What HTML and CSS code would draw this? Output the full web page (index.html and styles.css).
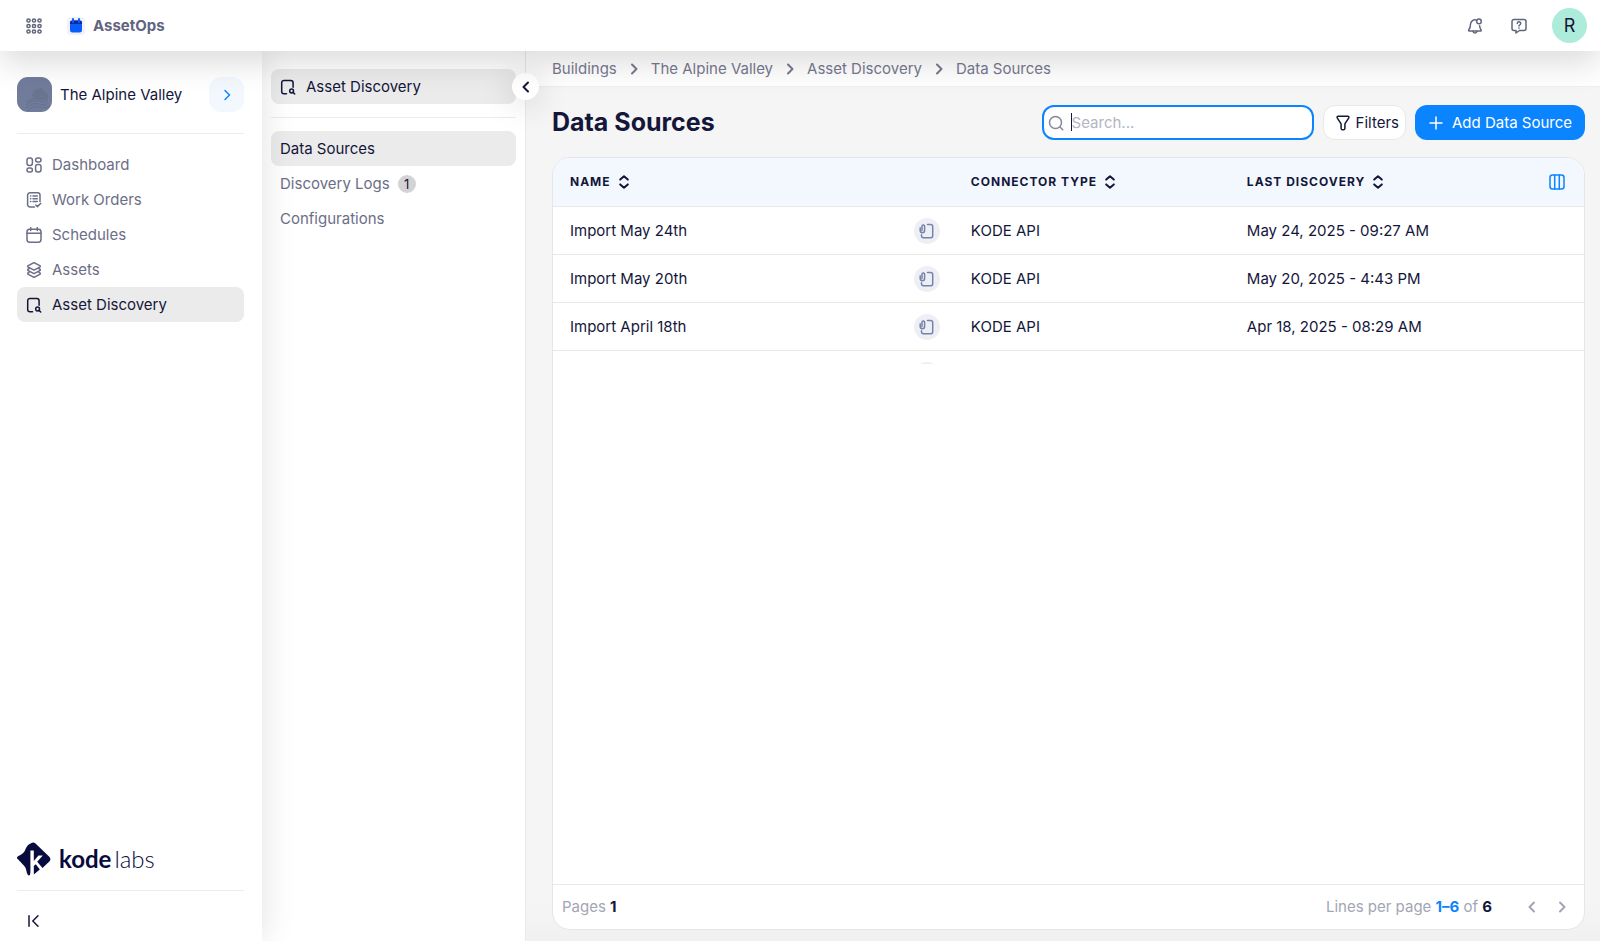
FILE: index.html
```html
<!DOCTYPE html>
<html lang="en">
<head>
    <meta charset="UTF-8">
    <meta name="viewport" content="width=device-width, initial-scale=1.0">
    <title>AssetOps - Data Sources</title>
    <link rel="stylesheet" href="styles.css">
</head>
<body>

<svg width="0" height="0" class="sprite" aria-hidden="true">
    <symbol id="i-discovery" viewBox="0 0 16 16">
        <path d="M6.5 14.8H4a2.3 2.3 0 0 1-2.3-2.3V3.7A2.3 2.3 0 0 1 4 1.4h6.8a2.3 2.3 0 0 1 2.3 2.3v4.6"/>
        <circle cx="11.6" cy="12" r="1.9"/>
        <path d="M13 13.4l1.7 1.6"/>
    </symbol>
    <symbol id="i-right" viewBox="0 0 16 16"><path d="M6 3.5l4.5 4.5L6 12.5"/></symbol>
    <symbol id="i-left" viewBox="0 0 16 16"><path d="M10 3.5L5.5 8l4.5 4.5"/></symbol>
    <symbol id="i-sort" viewBox="0 0 12 16"><path d="M2.2 5.6L6 2.2l3.8 3.4M2.2 10.4L6 13.8l3.8-3.4"/></symbol>
    <symbol id="i-doc" viewBox="0 0 16 16">
        <path d="M8.5 1.5h3.2a2 2 0 0 1 2 2v9.300a2 2 0 0 1-2 2H4.500a2 2 0 0 1-2-2v-1"/>
        <path d="M1.200 4.800v2.800a2.200 2.200 0 0 0 4.400 0V3.200a1.300 1.300 0 0 0-2.600 0v4.200"/>
    </symbol>
</svg>

<header class="topbar">
    <button class="icon-btn" aria-label="Apps">
        <svg class="icon" viewBox="0 0 16 16">
            <circle cx="2.5" cy="2.5" r="1.6"/><circle cx="8" cy="2.5" r="1.6"/><circle cx="13.5" cy="2.5" r="1.6"/>
            <circle cx="2.5" cy="8" r="1.6"/><circle cx="8" cy="8" r="1.6"/><circle cx="13.5" cy="8" r="1.6"/>
            <circle cx="2.5" cy="13.5" r="1.6"/><circle cx="8" cy="13.5" r="1.6"/><circle cx="13.5" cy="13.5" r="1.6"/>
        </svg>
    </button>
    <a class="brand" href="#">
        <svg class="brand-icon" viewBox="0 0 18 18">
            <rect width="18" height="18" rx="4" fill="#f0f1fb"/>
            <rect x="3" y="3.5" width="12" height="12" rx="2.5" fill="#0a5cff"/>
            <path d="M3 7V5.500a2 2 0 0 1 2-2h8a2 2 0 0 1 2 2V7z" fill="#0a2a9c"/>
            <path d="M6 2v3M12 2v3" stroke="#0a5cff" stroke-width="2" stroke-linecap="round"/>
        </svg>
        AssetOps
    </a>
    <div class="topbar-right">
        <button class="icon-btn" aria-label="Notifications">
            <svg class="icon" viewBox="0 0 16 16">
                <path d="M9 1.9A4.600 4.600 0 0 0 3.500 6.300c0 3.200-.7 4.200-1.700 5.400-.4.600-.1 1.400.7 1.400h10.800c.9 0 1.200-.8.700-1.400-.7-.9-1.200-2-1.400-4"/>
                <path d="M5.900 13.400a2.200 2.200 0 0 0 4.200 0"/>
                <circle cx="12" cy="3.400" r="2.300"/>
            </svg>
        </button>
        <button class="icon-btn" aria-label="Help">
            <svg class="icon" viewBox="0 0 16 16">
                <path d="M3 1.500h10a2 2 0 0 1 2 2v7a2 2 0 0 1-2 2H8.500L5 15v-2.500H3a2 2 0 0 1-2-2v-7a2 2 0 0 1 2-2z"/>
                <path d="M6.300 5.400a1.700 1.700 0 1 1 2.500 1.500c-.6.300-.8.600-.8 1.100M8 9.900v.3"/>
            </svg>
        </button>
        <button class="avatar">R</button>
    </div>
</header>

<div class="layout">
    <aside class="sidebar">
        <div class="building">
            <span class="building-img">
                <svg viewBox="0 0 35 35">
                    <g fill="none" stroke="#65728f" stroke-width="1">
                        <path d="M9 28q7-6 13-4t9-1M9 31q7-6 13-4t9-1M10 34q7-6 13-4t9-1M10 25q6-5 12-3t9-2"/>
                    </g>
                    <path d="M14 19l4-6 6-2 7 6v5q-8 2-17-3z" fill="#69758f"/>
                </svg>
            </span>
            <span class="building-name">The Alpine Valley</span>
            <button class="building-btn" aria-label="Switch building"><svg class="icon"><use href="#i-right"/></svg></button>
        </div>
        <nav class="menu">
            <a class="menu-item" href="#">
                <svg class="icon" viewBox="0 0 16 16">
                    <rect x="1" y="1" width="5.400" height="7.400" rx="2.200"/><rect x="9.600" y="1" width="5.400" height="4" rx="2"/>
                    <rect x="1" y="11" width="5.400" height="4" rx="2"/><rect x="9.600" y="7.600" width="5.400" height="7.400" rx="2.200"/>
                </svg>
                Dashboard
            </a>
            <a class="menu-item" href="#">
                <svg class="icon" viewBox="0 0 16 16">
                    <path d="M14 9.500V3.200A2.400 2.400 0 0 0 11.600.8H4a2.400 2.400 0 0 0-2.400 2.400v9.400A2.400 2.400 0 0 0 4 15h4.500"/>
                    <path d="M4.500 4h.3M7 4h4.300M4.500 6.800h.3M7 6.800h4.300M4.500 9.600h.3M7 9.600h4.300M9.800 13l1.700 1.600 3.300-3.300"/>
                </svg>
                Work Orders
            </a>
            <a class="menu-item" href="#">
                <svg class="icon" viewBox="0 0 16 16">
                    <rect x="1" y="2.200" width="14" height="13" rx="2.600"/>
                    <path d="M1 6.300h14M4.700.6v3M11.300.6v3"/>
                </svg>
                Schedules
            </a>
            <a class="menu-item" href="#">
                <svg class="icon" viewBox="0 0 16 16">
                    <path d="M8 .6l6.200 3.200v1L8 8.100 1.800 4.800v-1z"/>
                    <path d="M3.200 6.500L1.800 7.400v1L8 11.700l6.200-3.300v-1l-1.400-.9M3.200 10.200l-1.400.9v1L8 15.400l6.200-3.300v-1l-1.400-.9"/>
                </svg>
                Assets
            </a>
            <a class="menu-item active" href="#">
                <svg class="icon"><use href="#i-discovery"/></svg>
                Asset Discovery
            </a>
        </nav>
        <div class="sidebar-bottom">
            <div class="logo">
                <svg class="logo-mark" viewBox="0 0 34 34">
                    <path d="M14 1.200q2.300-1.500 4.500.3l13.800 13.300q2.200 2.300 0 4.700L25.500 26l-5.300-6.200 5.600-6.300h-4.300l-4.700 5.400V8.500h-3.400v21q.2 3.600-1.500 4-2-.6-2.600-5.200-.4-2.800-2-4.400L1.200 17.600q-2.300-1.600-.2-3.400Q7.300 12 9 6q1.500-3.500 5-4.800z"/>
                    <path d="M16.800 24l2-1.800 4 5.400-6 5z"/>
                </svg>
                <span class="logo-text"><b>kode</b>labs</span>
            </div>
            <button class="collapse" aria-label="Collapse sidebar">
                <svg class="icon" viewBox="0 0 16 16"><path d="M3 2.800v10.400M12 2.800L6.800 8l5.200 5.200"/></svg>
            </button>
        </div>
    </aside>

    <aside class="subnav">
        <a class="menu-item active" href="#">
            <svg class="icon"><use href="#i-discovery"/></svg>
            Asset Discovery
        </a>
        <button class="subnav-toggle" aria-label="Hide menu"><svg class="icon"><use href="#i-left"/></svg></button>
        <nav class="submenu">
            <a class="menu-item active" href="#">Data Sources</a>
            <a class="menu-item" href="#">Discovery Logs <span class="badge">1</span></a>
            <a class="menu-item" href="#">Configurations</a>
        </nav>
    </aside>

    <main class="main">
        <nav class="breadcrumb">
            <a href="#">Buildings</a>
            <svg class="icon"><use href="#i-right"/></svg>
            <a href="#">The Alpine Valley</a>
            <svg class="icon"><use href="#i-right"/></svg>
            <a href="#">Asset Discovery</a>
            <svg class="icon"><use href="#i-right"/></svg>
            <a href="#">Data Sources</a>
        </nav>
        <div class="content">
            <div class="toolbar">
                <h1>Data Sources</h1>
                <label class="search">
                    <svg class="icon" viewBox="0 0 16 16"><circle cx="7.500" cy="7.500" r="6"/><path d="M12 12l2.800 2.800"/></svg>
                    <span class="caret"></span>
                    <input type="text" placeholder="Search..." aria-label="Search">
                </label>
                <button class="btn btn-filter">
                    <svg class="icon" viewBox="0 0 16 16"><path d="M3.200 1.200h9.600q1.400.2 1 1.700L9.900 8.800v4.700q-.2 1.300-1.300 1.300H7.400q-1.100 0-1.300-1.300V8.800L2.200 2.900q-.4-1.500 1-1.700z"/></svg>
                    Filters
                </button>
                <button class="btn btn-primary">
                    <svg class="icon" viewBox="0 0 16 16"><path d="M8 2v12M2 8h12"/></svg>
                    Add Data Source
                </button>
            </div>

            <div class="card">
                <div class="table-wrap">
                    <table>
                        <colgroup>
                            <col class="col-name">
                            <col class="col-doc">
                            <col class="col-type">
                            <col>
                            <col class="col-tools">
                        </colgroup>
                        <thead>
                        <tr>
                            <th colspan="2"><button class="sort">NAME <svg><use href="#i-sort"/></svg></button></th>
                            <th><button class="sort">CONNECTOR TYPE <svg><use href="#i-sort"/></svg></button></th>
                            <th><button class="sort">LAST DISCOVERY <svg><use href="#i-sort"/></svg></button></th>
                            <th>
                                <button class="columns-btn" aria-label="Columns">
                                    <svg class="icon" viewBox="0 0 16 16"><rect x="1" y="1" width="14" height="14" rx="2.500"/><path d="M5.700 1v14M10.300 1v14"/></svg>
                                </button>
                            </th>
                        </tr>
                        </thead>
                        <tbody>
                        <tr>
                            <td>Import May 24th</td>
                            <td><span class="doc"><svg class="icon"><use href="#i-doc"/></svg></span></td>
                            <td>KODE API</td>
                            <td>May 24, 2025 - 09:27 AM</td>
                            <td></td>
                        </tr>
                        <tr>
                            <td>Import May 20th</td>
                            <td><span class="doc"><svg class="icon"><use href="#i-doc"/></svg></span></td>
                            <td>KODE API</td>
                            <td>May 20, 2025 - 4:43 PM</td>
                            <td></td>
                        </tr>
                        <tr>
                            <td>Import April 18th</td>
                            <td><span class="doc"><svg class="icon"><use href="#i-doc"/></svg></span></td>
                            <td>KODE API</td>
                            <td>Apr 18, 2025 - 08:29 AM</td>
                            <td></td>
                        </tr>
                        <tr>
                            <td></td>
                            <td><span class="doc"></span></td>
                            <td></td>
                            <td></td>
                            <td></td>
                        </tr>
                        </tbody>
                    </table>
                </div>
                <div class="card-footer">
                    <div>Pages <b>1</b></div>
                    <div class="pager">
                        <span>Lines per page <button class="range">1–6</button> of <b>6</b></span>
                        <div class="pager-nav">
                            <button aria-label="Previous page"><svg class="icon"><use href="#i-left"/></svg></button>
                            <button aria-label="Next page"><svg class="icon"><use href="#i-right"/></svg></button>
                        </div>
                    </div>
                </div>
            </div>
        </div>
    </main>
</div>

</body>
</html>
```

FILE: styles.css
```css
* {
    box-sizing: border-box;
}
body {
    margin: 0;
    height: 100vh;
    display: flex;
    flex-direction: column;
    font-family: Inter, sans-serif;
    font-size: 15px;
    line-height: 20px;
    color: #14163a;
    background-color: #fff;
    overflow: hidden;
}
a {
    color: inherit;
    text-decoration: none;
}
button {
    font: inherit;
    color: inherit;
    background: none;
    border: none;
    padding: 0;
    cursor: pointer;
}
.sprite {
    position: absolute;
}
.icon {
    width: 16px;
    height: 16px;
    flex: none;
    display: block;
    fill: none;
    stroke: currentColor;
    stroke-width: 1.5;
    stroke-linecap: round;
    stroke-linejoin: round;
}

/* top bar */
.topbar {
    position: relative;
    z-index: 3;
    flex: none;
    height: 51px;
    padding: 0 13px 0 26px;
    display: flex;
    align-items: center;
    gap: 25px;
    background-color: #fff;
    color: #62647f;
    box-shadow: 0 12px 32px rgba(0,0,0,0.14);
}
.brand {
    display: flex;
    align-items: center;
    gap: 8px;
    font-weight: 700;
}
.brand-icon {
    width: 18px;
    height: 18px;
}
.topbar-right {
    margin-left: auto;
    display: flex;
    align-items: center;
    gap: 28px;
}
.avatar {
    width: 35px;
    height: 35px;
    border-radius: 50%;
    background-color: #adebdb;
    color: #14163a;
    font-size: 18px;
    margin-left: -3px;
}

.layout {
    flex: 1;
    min-height: 0;
    display: flex;
}

/* sidebar */
.sidebar {
    position: relative;
    z-index: 2;
    width: 262px;
    flex: none;
    display: flex;
    flex-direction: column;
    padding: 26px 18px 0 17px;
    background-color: #fff;
    box-shadow: 2px 0 32px rgba(0,0,0,0.11);
}
.building {
    display: flex;
    align-items: center;
    padding-bottom: 21px;
    border-bottom: 1px solid #ececec;
}
.building-img {
    width: 35px;
    height: 35px;
    border-radius: 11px;
    background-color: #707c9a;
    overflow: hidden;
}
.building-name {
    margin-left: 8px;
}
.building-btn {
    width: 35px;
    height: 35px;
    margin-left: auto;
    display: flex;
    align-items: center;
    justify-content: center;
    border-radius: 12px;
    background-color: #f3f8ff;
    color: #0a84ff;
}
.menu {
    margin-top: 13px;
}
.menu-item {
    height: 35px;
    padding: 0 9px;
    display: flex;
    align-items: center;
    gap: 10px;
    border-radius: 8px;
    color: #6c6e86;
}
.menu-item.active {
    background-color: #ebebeb;
    color: #14163a;
}
.sidebar-bottom {
    margin-top: auto;
}
.logo {
    display: flex;
    align-items: center;
    gap: 8px;
    padding-bottom: 14px;
    border-bottom: 1px solid #ececec;
    color: #070b3d;
}
.logo-mark {
    width: 34px;
    height: 34px;
    fill: currentColor;
}
.logo-text {
    font-family: Lato, sans-serif;
    font-size: 24px;
    line-height: 24px;
    font-weight: 300;
}
.logo-text b {
    font-weight: 700;
    margin-right: 3px;
}
.collapse {
    display: block;
    padding: 22px 9px 12px;
}

/* second column */
.subnav {
    position: relative;
    z-index: 1;
    width: 264px;
    flex: none;
    padding: 18px 9px 0;
    border-right: 1px solid #e9e9e9;
    background-color: #fff;
}
.subnav-toggle {
    position: absolute;
    top: 22px;
    right: -14px;
    width: 27px;
    height: 27px;
    display: flex;
    align-items: center;
    justify-content: center;
    border-radius: 50%;
    background-color: #fff;
    box-shadow: 0 4px 32px rgba(0,0,0,0.18);
}
.subnav-toggle .icon {
    stroke-width: 2;
}
.submenu {
    margin-top: 13px;
    padding-top: 13px;
    border-top: 1px solid #ececec;
}
.submenu .menu-item {
    gap: 8px;
}
.badge {
    width: 18px;
    height: 18px;
    border-radius: 50%;
    background-color: #d3d3d5;
    color: #14163a;
    font-size: 13px;
    line-height: 18px;
    text-align: center;
}

/* main */
.main {
    flex: 1;
    min-width: 0;
    display: flex;
    flex-direction: column;
    background-color: #f5f5f5;
}
.breadcrumb {
    height: 36px;
    flex: none;
    padding: 0 26px;
    display: flex;
    align-items: center;
    gap: 9px;
    background-color: #fff;
    border-bottom: 1px solid #efefef;
    color: #77798f;
}
.breadcrumb .icon {
    stroke-width: 2;
}
.content {
    flex: 1;
    min-height: 0;
    display: flex;
    flex-direction: column;
    padding: 18px 15px 11px 26px;
    background: linear-gradient(to bottom, transparent calc(100% - 40px), rgba(0,0,0,0.02));
}
.toolbar {
    display: flex;
    align-items: center;
    gap: 9px;
    margin-bottom: 17px;
}
h1 {
    margin: 0 auto 0 0;
    font-size: 25px;
    line-height: 35px;
    font-weight: 700;
}
.search {
    position: relative;
    width: 272px;
    height: 35px;
    padding: 0 10px 0 4px;
    display: flex;
    align-items: center;
    gap: 8px;
    border: 2px solid #0a84ff;
    border-radius: 12px;
    background-color: #fff;
    color: #85879b;
}
.search input {
    width: 100%;
    min-width: 0;
    padding: 0;
    border: none;
    outline: none;
    background: none;
    font: inherit;
    color: #14163a;
}
.search input::placeholder {
    color: #b4b5c2;
}
.caret {
    position: absolute;
    left: 27px;
    top: 6px;
    width: 1px;
    height: 18px;
    background-color: #14163a;
}
.btn {
    height: 35px;
    display: flex;
    align-items: center;
    border-radius: 12px;
    white-space: nowrap;
}
.btn-filter {
    padding: 0 6px 0 11px;
    gap: 5px;
    border: 1px solid #e8e8e8;
    background-color: #fff;
}
.btn-primary {
    padding: 0 13px;
    gap: 8px;
    background-color: #0a84ff;
    color: #fff;
}

.card {
    flex: 1;
    min-height: 0;
    display: flex;
    flex-direction: column;
    border: 1px solid #e4e6e8;
    border-radius: 18px;
    background-color: #fff;
    overflow: hidden;
}
.table-wrap {
    max-height: 206px;
    overflow: hidden;
}
table {
    width: 100%;
    border-collapse: separate;
    border-spacing: 0;
    table-layout: fixed;
}
.col-name {
    width: 35%;
}
.col-doc {
    width: 40px;
}
.col-type {
    width: 276px;
}
.col-tools {
    width: 52px;
}
th, td {
    height: 48px;
    padding: 0 0 0 17px;
    text-align: left;
    border-bottom: 1px solid #e8e8e8;
}
td:nth-child(2) {
    padding: 0;
}
th {
    height: 49px;
    background-color: #f3f8ff;
}
.sort {
    display: flex;
    align-items: center;
    gap: 7px;
    font-size: 12px;
    font-weight: 700;
    letter-spacing: 1px;
}
.sort svg {
    width: 12px;
    height: 16px;
    fill: none;
    stroke: currentColor;
    stroke-width: 2;
    stroke-linecap: round;
    stroke-linejoin: round;
}
.columns-btn {
    display: block;
    color: #0a84ff;
}
.doc {
    width: 26px;
    height: 26px;
    display: flex;
    align-items: center;
    justify-content: center;
    border-radius: 50%;
    background-color: #eeeff4;
    color: #7484ad;
}
.card-footer {
    margin-top: auto;
    height: 45px;
    padding: 0 14px 0 9px;
    display: flex;
    align-items: center;
    justify-content: space-between;
    border-top: 1px solid #e8e8e8;
    color: #a3a5b5;
}
.card-footer b {
    font-weight: 700;
    color: #14163a;
}
.pager {
    display: flex;
    align-items: center;
    gap: 32px;
}
.pager-nav {
    display: flex;
    gap: 14px;
}
.pager-nav .icon {
    stroke-width: 2;
}
.range {
    color: #0a84ff;
    font-weight: 700;
}
```
